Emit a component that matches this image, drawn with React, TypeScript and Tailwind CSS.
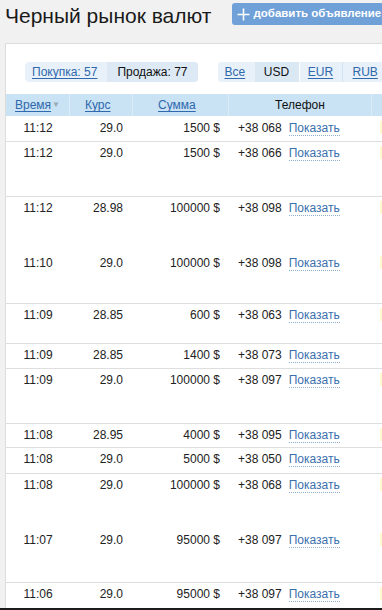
import React from "react";

interface Row {
  time: string;
  rate: string;
  sum: string;
  phone: string;
  h: number;
  line: boolean;
  note?: boolean;
}

const rows: Row[] = [
  { time: "11:12", rate: "29.0", sum: "1500 $", phone: "+38 068", h: 25, line: false, note: true },
  { time: "11:12", rate: "29.0", sum: "1500 $", phone: "+38 066", h: 55, line: true, note: true },
  { time: "11:12", rate: "28.98", sum: "100000 $", phone: "+38 098", h: 55, line: true, note: true },
  { time: "11:10", rate: "29.0", sum: "100000 $", phone: "+38 098", h: 52, line: false, note: true },
  { time: "11:09", rate: "28.85", sum: "600 $", phone: "+38 063", h: 40, line: true, note: true },
  { time: "11:09", rate: "28.85", sum: "1400 $", phone: "+38 073", h: 25, line: true },
  { time: "11:09", rate: "29.0", sum: "100000 $", phone: "+38 097", h: 55, line: true, note: true },
  { time: "11:08", rate: "28.95", sum: "4000 $", phone: "+38 095", h: 24, line: true, note: true },
  { time: "11:08", rate: "29.0", sum: "5000 $", phone: "+38 050", h: 26, line: true },
  { time: "11:08", rate: "29.0", sum: "100000 $", phone: "+38 068", h: 55, line: true, note: true },
  { time: "11:07", rate: "29.0", sum: "95000 $", phone: "+38 097", h: 54, line: false, note: true },
  { time: "11:06", rate: "29.0", sum: "95000 $", phone: "+38 097", h: 40, line: true, note: true },
];

const cols = "grid grid-cols-[64px_63px_96px_143px_1fr]";

export default function App() {
  return (
    <div className="w-[382px] h-[610px] overflow-hidden bg-[#f1f1f1] flex flex-col font-['Liberation_Sans',Arial,sans-serif] text-[#222]">
      {/* Header */}
      <div className="flex items-start pt-[3px] pl-[5px] whitespace-nowrap">
        <h1 className="text-[21px] leading-[24px] mt-[1px] font-normal text-[#1a1a1a]">Черный рынок валют</h1>
        <div className="ml-[21px] h-[22px] flex shrink-0 items-center bg-[#6fa0d8] rounded-[3px] pl-[5px] pr-2 text-white text-[11.5px] font-bold">
          <svg width="13" height="13" viewBox="0 0 13 13" className="mr-[3px]">
            <path d="M6.5 0.5v12M0.5 6.5h12" stroke="white" strokeWidth="1.6" />
          </svg>
          добавить объявление
        </div>
      </div>

      {/* Panel */}
      <div className="mt-[15px] ml-[5px] flex-1 min-h-0 bg-white border-l border-t border-[#dcdcdc] flex flex-col overflow-hidden text-[12px] leading-[14px]">
        {/* Tabs */}
        <div className="flex pt-[18px] pl-[19px] whitespace-nowrap">
          <div className="flex h-[20px] items-stretch rounded-[4px] bg-[#e8f1f9] overflow-hidden">
            <span className="pl-[7px] pr-[10px] flex items-center text-[#2f68ad] underline underline-offset-2">Покупка: 57</span>
            <span className="px-[10px] flex items-center bg-[#dde9f4] text-[#111]">Продажа: 77</span>
          </div>
          <div className="ml-[20px] flex flex-1 h-[20px] items-stretch rounded-l-[4px] bg-[#e8f1f9] overflow-hidden">
            <span className="w-[37px] pl-[7px] flex items-center text-[#2f68ad] underline underline-offset-2">Все</span>
            <span className="w-[45px] flex items-center justify-center bg-[#dae8f4] text-[#111] border-r border-white">USD</span>
            <span className="w-[43px] flex items-center justify-center border-r border-[#d2e3f1]">
              <span className="text-[#2f68ad] underline underline-offset-2">EUR</span>
            </span>
            <span className="pl-[10px] flex items-center text-[#2f68ad] underline underline-offset-2">RUB</span>
          </div>
        </div>

        {/* Table head */}
        <div className={`${cols} mt-[12px] h-[22px] bg-[#c9e2f4] items-center whitespace-nowrap`}>
          <div className="pl-[9px] border-r border-[#dbecf8] h-full flex items-center">
            <span className="text-[#2f68ad] underline underline-offset-2">Время</span>
            <span className="text-[#9aa9b5] text-[8px] ml-[1px]">▼</span>
          </div>
          <div className="pl-[15px] border-r border-[#dbecf8] h-full flex items-center">
            <span className="text-[#2f68ad] underline underline-offset-2">Курс</span>
          </div>
          <div className="pl-[25px] border-r border-[#dbecf8] h-full flex items-center">
            <span className="text-[#2f68ad] underline underline-offset-2">Сумма</span>
          </div>
          <div className="border-r border-[#dbecf8] h-full flex items-center justify-center text-[#111]">Телефон</div>
          <div />
        </div>

        {/* Rows */}
        <div className="flex-1 min-h-0 overflow-hidden">
          {rows.map((r, i) => (
            <div
              key={i}
              className={`${cols} whitespace-nowrap ${r.line ? "border-t border-[#dedede]" : "border-t border-transparent"}`}
              style={{ height: r.h }}
            >
              <div className="pt-[4px] text-center">{r.time}</div>
              <div className="pt-[4px] text-right pr-[10px]">{r.rate}</div>
              <div className="pt-[4px] text-right pr-[9px]">{r.sum}</div>
              <div className="pt-[4px] pl-[9px] flex">
                <span>{r.phone}</span>
                <span className="ml-[7px] text-[#3a6fad] border-b border-dotted border-[#8eaed0] h-[15px]">Показать</span>
              </div>
              <div className="pt-[4px] pl-[8px]">
                {r.note && <span className="inline-block w-[4px] h-[13px] bg-[#fff9cf]" />}
              </div>
            </div>
          ))}
        </div>
      </div>
      <div className="h-[2px] bg-[#1c1c1c]" />
    </div>
  );
}
